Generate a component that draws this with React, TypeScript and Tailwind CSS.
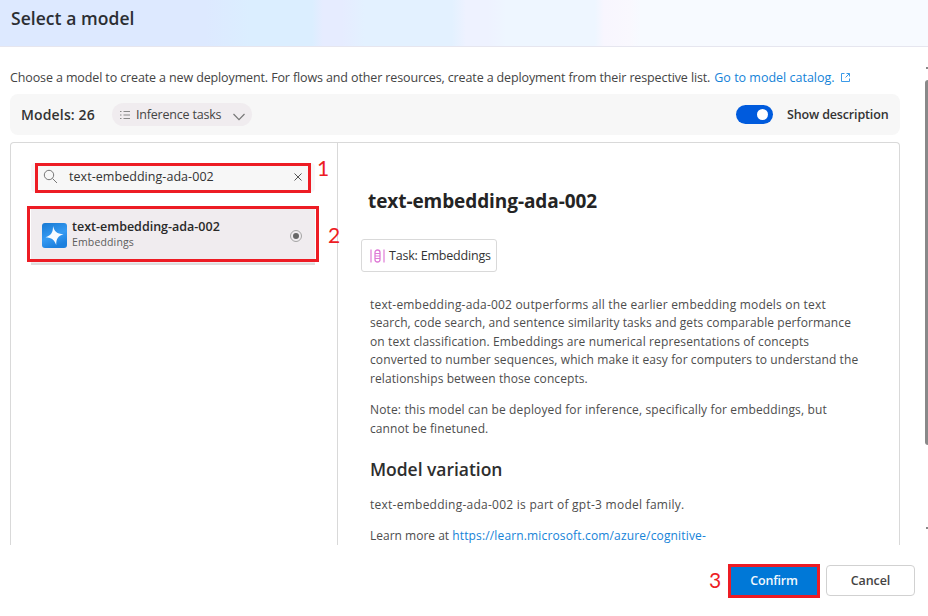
import { ReactNode } from "react";

function Callout({ children, className }: { children: ReactNode; className: string }) {
  return (
    <span className={`absolute font-[Lato,sans-serif] text-[21px] leading-[24px] tracking-normal text-[#ed1c24] ${className}`}>
      {children}
    </span>
  );
}

function Header() {
  return (
    <header className="h-[47px] shrink-0 border-b border-[#e6e6ef] bg-[linear-gradient(90deg,#dde9ff_0px,#dde9ff_205px,#dbeeff_250px,#dbeeff_312px,#e6ecff_323px,#e6ecff_342px,#e3f1ff_365px,#e3f1ff_452px,#eef2ff_466px,#eef2ff_488px,#eef6ff_506px,#eef6ff_595px,#f8f6fe_604px,#f9f8fe_630px,#f7faff_640px,#f7faff_100%)] pl-[11px]">
      <h1 className="text-[17.5px] leading-[37px] font-semibold tracking-[0.05px] text-[#2b2e33]">Select a model</h1>
    </header>
  );
}

function Toolbar() {
  return (
    <div className="mt-[6px] flex h-[41px] items-center rounded-[8px] bg-[#f7f7f7] pr-[11px] pl-[11px] text-[#333]">
      <span className="w-[91px] text-[14px] font-semibold tracking-[0.15px]">Models: 26</span>
      <button className="flex h-[23px] w-[140px] items-center rounded-full bg-[#f0ecef] pl-[8px] text-[12.5px] text-[#444]">
        <svg className="mr-[6px] h-[10px] w-[10px]" viewBox="0 0 10 10" stroke="#888" fill="none">
          <path d="M0 1.5h1.5M3.5 1.5H10M0 5h1.5M3.5 5H10M0 8.5h1.5M3.5 8.5H10" />
        </svg>
        <span className="mt-px w-[97px] text-left tracking-[-0.2px]">Inference tasks</span>
        <svg className="mt-[4px] h-[8px] w-[12px]" viewBox="0 0 12 8" stroke="#777" fill="none" strokeWidth="1.2">
          <path d="M.5 1 6 6.7 11.500 1" />
        </svg>
      </button>
      <span className="ml-auto flex h-[19px] w-[37px] items-center justify-end rounded-full bg-[#005bdd] pr-[5px]">
        <span className="h-[11px] w-[11px] rounded-full bg-white" />
      </span>
      <span className="mt-px ml-[14px] w-[102px] text-[12.5px] font-semibold tracking-[-0.15px] whitespace-nowrap">Show description</span>
    </div>
  );
}

function ModelList() {
  return (
    <div className="w-[327px] shrink-0 border-r border-[#d9d9d9] pt-[20px] pl-[20px]">
      <div className="relative flex h-[29px] w-[284px] items-center rounded-[4px] bg-[#f7f7f7] pl-[12px] text-[#333]">
        <svg className="mt-[-3px] h-[15px] w-[15px]" viewBox="0 0 15 15" stroke="#777" fill="none">
          <circle cx="6" cy="6" r="4.700" />
          <path d="m9.500 9.500 4.500 4.500" />
        </svg>
        <span className="mt-[-1px] ml-[11px] text-[12.5px] tracking-[0.05px]">text-embedding-ada-002</span>
        <svg className="mt-[-2px] mr-[13px] ml-auto h-[8px] w-[8px]" viewBox="0 0 8 8" stroke="#555" fill="none">
          <path d="m.5.5 7 7m0-7-7 7" />
        </svg>
        <span className="absolute top-0 left-[4px] h-[30px] w-[276px] border-3 border-[#ed1c24]" />
        <Callout className="top-[-7px] left-[286px]">1</Callout>
      </div>
      <div className="relative mt-[16px] flex h-[57px] w-[284px] items-center border-b-2 border-[#dedede] bg-[#f0ecef] pl-[11px]">
        <svg className="h-[25px] w-[25px]" viewBox="0 0 25 25">
          <defs>
            <linearGradient id="tile" x1="0" y1="0" x2="0.4" y2="1">
              <stop stopColor="#1778d2" />
              <stop offset=".6" stopColor="#369bf3" />
              <stop offset="1" stopColor="#1c80de" />
            </linearGradient>
          </defs>
          <rect width="25" height="25" rx="3" fill="url(#tile)" />
          <path d="M11 3c1.700 6 3.500 7.500 10.500 8.300-5.700 2-7.200 4.200-7.300 10.700C12 16.500 10 15 3.500 14.300 9.500 12 11 9.500 11 3z" fill="#f7fbff" />
        </svg>
        <div className="ml-[5px]">
          <div className="mt-[-3px] text-[12.5px] leading-[16px] font-semibold text-[#292929]">text-embedding-ada-002</div>
          <div className="text-[10.5px] leading-[15px] font-medium tracking-[0.15px] text-[#5c5c5c]">Embeddings</div>
        </div>
        <span className="mt-px mr-[13px] ml-auto flex h-[12px] w-[12px] items-center justify-center rounded-full border border-[#a5a5a5]">
          <span className="h-[6px] w-[6px] rounded-full bg-[#666]" />
        </span>
        <span className="absolute top-[-2px] left-[-4px] h-[56px] w-[292px] border-3 border-[#ed1c24]" />
        <Callout className="top-[15px] left-[297px]">2</Callout>
      </div>
    </div>
  );
}

function Description() {
  return (
    <article className="pl-[23px] text-[12px] leading-[18.600px] whitespace-nowrap text-[#4d4d4d]">
      <h2 className="mt-[44px] ml-[7px] text-[19px] leading-[28px] font-bold tracking-[-0.08px] text-[#242424]">text-embedding-ada-002</h2>
      <div className="mt-[24px] flex h-[33px] w-[136px] items-center rounded-[3px] border border-[#d9d9d9] pl-[8px] text-[12.5px] tracking-[-0.2px] text-[#333]">
        <svg className="mr-[4px] h-[14px] w-[15px]" viewBox="0 0 15 14" stroke="#df7bd6" fill="none">
          <path strokeWidth="1.2" d="M1 .5v13M14 .5v13M5 4.500h5M5 9.500h5M5 7h5" />
          <rect x="5" y="1" width="5" height="12" rx="2.500" strokeWidth="1.3" />
        </svg>
        <span className="pt-px">Task: Embeddings</span>
      </div>
      <div className="ml-[9px]">
        <p className="mt-[23.500px]">
          <span className="tracking-[0.19px]">text-embedding-ada-002 outperforms all the earlier embedding models on text</span>
          <br />
          <span className="tracking-[0.08px]">search, code search, and sentence similarity tasks and gets comparable performance</span>
          <br />
          <span className="tracking-[0.13px]">on text classification. Embeddings are numerical representations of concepts</span>
          <br />
          <span className="tracking-[0.1px]">converted to number sequences, which make it easy for computers to understand the</span>
          <br />
          <span className="tracking-[0.08px]">relationships between those concepts.</span>
        </p>
        <p className="mt-[12.500px]">
          <span className="tracking-[0.14px]">Note: this model can be deployed for inference, specifically for embeddings, but</span>
          <br />
          <span className="tracking-[0.1px]">cannot be finetuned.</span>
        </p>
        <h3 className="mt-[18px] text-[17.5px] leading-[26px] font-semibold tracking-[-0.03px] text-[#2e2e2e]">Model variation</h3>
        <p className="mt-[14px] tracking-[0.25px]">text-embedding-ada-002 is part of gpt-3 model family.</p>
        <p className="mt-[12px]">
          Learn more at <a className="tracking-[0.15px] text-[#1583d8]">https://learn.microsoft.com/azure/cognitive-</a>
        </p>
      </div>
    </article>
  );
}

export default function App() {
  return (
    <div className="flex h-[616px] w-[928px] flex-col overflow-hidden bg-white font-['Open_Sans','Noto_Sans',sans-serif]">
      <Header />
      <div className="flex h-[498px] shrink-0 justify-between">
        <main className="ml-[10px] flex w-[890px] flex-col pt-[21px]">
          <p className="flex h-[20px] items-center text-[12.5px] whitespace-nowrap text-[#444]">
            <span className="tracking-[-0.124px]">Choose a model to create a new deployment. For flows and other resources, create a deployment from their respective list.</span>
            <a className="ml-[4px] text-[#1583d8]">Go to model catalog.</a>
            <svg className="mt-[-1px] ml-[6px] h-[9px] w-[9px]" viewBox="0 0 9 9" stroke="#3b9ae8" fill="none">
              <path d="M3.500.5h-3v8h8v-3M5.500.5h3v3M8.500.5l-4 4" />
            </svg>
          </p>
          <Toolbar />
          <section className="mt-[7px] flex min-h-0 flex-1 overflow-hidden rounded-t-[4px] border border-b-0 border-[#d9d9d9]">
            <ModelList />
            <Description />
          </section>
        </main>
        <div className="flex w-[3px] flex-col items-end overflow-hidden pt-[20px]">
          <span className="h-[2px] w-[2px] bg-[#888]" />
          <span className="mt-[11px] h-[365px] w-[3px] shrink-0 rounded-l-full bg-[#898989]" />
          <span className="mt-[82px] h-[2px] w-[2px] bg-[#888]" />
        </div>
      </div>
      <footer className="flex justify-end pt-[19px] pr-[13px] text-[12.5px] font-semibold">
        <button className="relative h-[34px] w-[92px] border-3 border-[#ed1c24] bg-[#0078d7] tracking-[-0.2px] text-[#f2f8fd]">
          Confirm
          <Callout className="top-[1px] left-[-22px] font-normal">3</Callout>
        </button>
        <button className="mt-[1px] ml-[6px] h-[31px] w-[89px] rounded-[4px] border border-[#d1d1d1] pt-[2px] tracking-[-0.1px] text-[#444]">Cancel</button>
      </footer>
    </div>
  );
}
